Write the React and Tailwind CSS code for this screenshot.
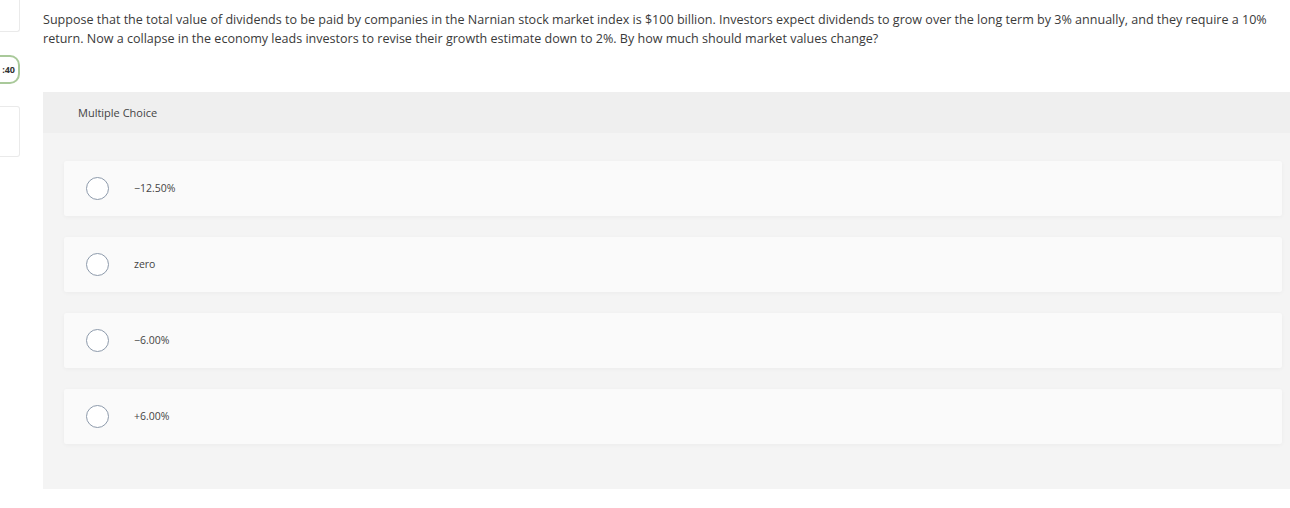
const options = ["−12.50%", "zero", "−6.00%", "+6.00%"];

function Radio() {
  return (
    <span className="block w-[23px] h-[23px] rounded-full border-[1.5px] border-[#8d9aab] bg-white shrink-0" />
  );
}

export default function App() {
  return (
    <div
      className="relative w-[1290px] h-[508px] bg-white overflow-hidden text-[#333]"
      style={{ fontFamily: "'Open Sans', Lato, sans-serif" }}
    >
      {/* left rail, cut off by the viewport */}
      <div className="absolute left-0 top-0 w-[20px] flex flex-col">
        <div className="h-[32px] border border-l-0 border-t-0 border-[#eaeaea] rounded-br-[3px]" />
        <div className="mt-[23px] -ml-[14px] h-[29px] w-[34px] rounded-[10px] border-2 border-[#a9c99a] flex items-center justify-end pr-[3px] text-[9px] font-bold text-[#333]">
          :40
        </div>
        <div className="mt-[22px] h-[51px] border border-l-0 border-[#eaeaea] rounded-r-[3px]" />
      </div>

      <div className="pl-[43px] pt-[10px]">
        <p className="whitespace-nowrap text-[12.55px] leading-[19px] text-[#3a3a3a]">
          Suppose that the total value of dividends to be paid by companies in the Narnian stock market index is
          $100 billion. Investors expect dividends to grow over the long term by 3% annually, and they require a 10%
          <br />
          return. Now a collapse in the economy leads investors to revise their growth estimate down to 2%. By how
          much should market values change?
        </p>

        <div className="mt-[44px] bg-[#f4f4f4] h-[397px]">
          <div className="h-[41px] bg-[#efefef] pl-[35px] pt-[13px] text-[11px] text-[#444]">Multiple Choice</div>
          <div className="px-[21px] pt-[28px] flex flex-col gap-[21px] pr-[8px]">
            {options.map((o) => (
              <div
                key={o}
                className="h-[55px] bg-[#fafafa] rounded-[2px] shadow-[0_1px_4px_rgba(0,0,0,0.04)] flex items-center pl-[22px]"
              >
                <Radio />
                <span className="ml-[25px] text-[10.5px] text-[#444]">{o}</span>
              </div>
            ))}
          </div>
        </div>
      </div>
    </div>
  );
}
